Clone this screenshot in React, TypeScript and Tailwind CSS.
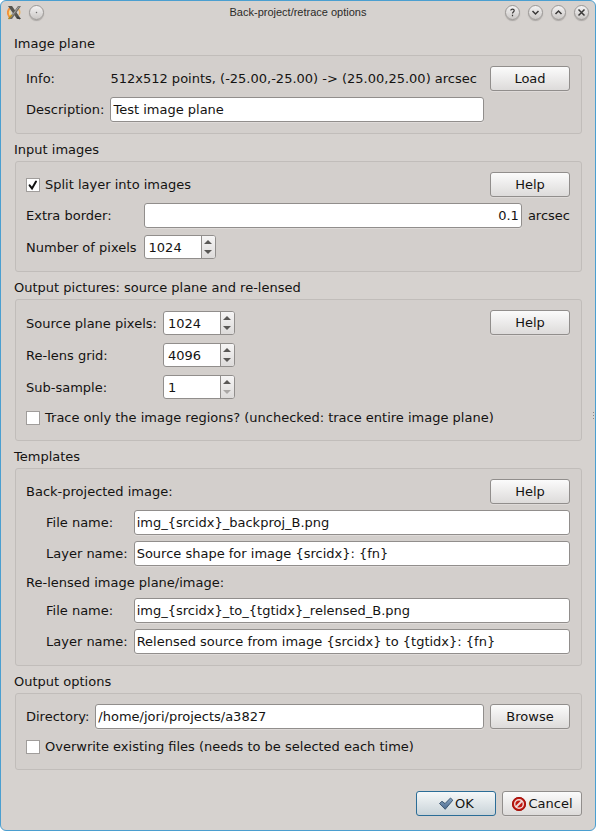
import React, { useId, useState } from "react";

const BUTTON =
  "h-[25px] w-20 rounded-[3px] border border-[#918e8c] bg-linear-to-b from-[#fbfbfb] to-[#dddbda] text-center shadow-[0_1px_0_#dedad8]";

const INPUT =
  "h-[25px] w-full min-w-0 rounded-[3px] border border-[#918e8c] bg-white px-0.5 outline-none shadow-[0_1px_0_#dedad8]";

interface GroupProps {
  title: string;
  children: React.ReactNode;
}

const Group: React.FC<GroupProps> = ({ title, children }) => (
  <section className="mb-2">
    <h2 className="mb-[3px] leading-4">{title}</h2>
    <div className="ml-px rounded-[3px] border border-[#c1bdba] bg-[#d3cfcc] pt-2.5 pr-[11px] pb-[11px] pl-2.5">
      {children}
    </div>
  </section>
);

interface CheckOptionProps {
  label: string;
  initial?: boolean;
}

const CheckOption: React.FC<CheckOptionProps> = ({ label, initial = false }) => {
  const [checked, setChecked] = useState(initial);

  return (
    <label className="flex items-center gap-[5px]">
      <span className="grid size-3.5 shrink-0">
        <input
          type="checkbox"
          checked={checked}
          onChange={(e) => setChecked(e.target.checked)}
          className="col-start-1 row-start-1 size-3.5 appearance-none border border-[#a09d9b] bg-white"
        />
        {checked && (
          <svg viewBox="0 0 14 14" fill="none" className="pointer-events-none col-start-1 row-start-1 size-3.5">
            <path d="M3.6 7.4L6 10.4L10 3.6" stroke="#111" strokeWidth="2" strokeLinecap="round" />
          </svg>
        )}
      </span>
      {label}
    </label>
  );
};

interface SpinRowProps {
  label: string;
  initial: number;
  min?: number;
}

// Renders two grid cells: the label and the spin box
const SpinRow: React.FC<SpinRowProps> = ({ label, initial, min = 0 }) => {
  const id = useId();
  const [value, setValue] = useState(initial);

  return (
    <>
      <label htmlFor={id} className="pt-0.5">
        {label}
      </label>
      <div className="flex h-[26px] items-center">
        <div className="flex h-6 w-[72px] overflow-hidden rounded-[3px] border border-[#918e8c] bg-white">
          <input
            id={id}
            type="number"
            min={min}
            value={value}
            onChange={(e) => setValue(Number(e.target.value))}
            className="w-14 min-w-0 appearance-none pt-0.5 pl-1 outline-none [appearance:textfield] [&::-webkit-inner-spin-button]:appearance-none"
          />
          <div className="flex flex-1 flex-col border-l border-[#918e8c] bg-linear-to-b from-[#f6f5f5] to-[#dddbda]">
            <button
              type="button"
              aria-label="Increase"
              onClick={() => setValue(value + 1)}
              className="flex flex-1 items-end justify-center pb-[3px] text-[#5a5856]"
            >
              <svg width="8" height="4" viewBox="0 0 8 4" fill="currentColor">
                <path d="M4 0L8 4H0z" />
              </svg>
            </button>
            <button
              type="button"
              aria-label="Decrease"
              disabled={value <= min}
              onClick={() => setValue(value - 1)}
              className="flex flex-1 items-start justify-center pt-[3px] text-[#5a5856] disabled:text-[#aaa7a5]"
            >
              <svg width="8" height="4" viewBox="0 0 8 4" fill="currentColor">
                <path d="M0 0H8L4 4z" />
              </svg>
            </button>
          </div>
        </div>
      </div>
    </>
  );
};

interface TextRowProps {
  label: string;
  initial: string;
}

const TextRow: React.FC<TextRowProps> = ({ label, initial }) => {
  const id = useId();

  return (
    <>
      <label htmlFor={id}>{label}</label>
      <input id={id} type="text" defaultValue={initial} className={INPUT} />
    </>
  );
};

interface TitleButtonProps {
  name: string;
  children: React.ReactNode;
}

const TitleButton: React.FC<TitleButtonProps> = ({ name, children }) => (
  <button
    type="button"
    aria-label={name}
    className="size-[15px] rounded-full border border-[#9b9896] bg-linear-to-b from-[#f4f3f3] to-[#cbc8c6] shadow-[0_1px_1px_#aaa6a3]"
  >
    <svg viewBox="0 0 13 13" fill="none" stroke="#3a3938" strokeWidth="1.5" className="size-[13px]">
      {children}
    </svg>
  </button>
);

const AppIcon: React.FC = () => (
  <svg viewBox="0 0 15 15" fill="none" className="size-[15px]">
    <path d="M3 3C0 6 0 10 4 13" stroke="#f4913a" strokeWidth="2" />
    <path d="M3 6C2 9 3 11 6 12" stroke="#f5dc7a" strokeWidth="1.5" />
    <path d="M10 4C13 4 13.5 8 12 10" stroke="#eab56a" strokeWidth="1.5" />
    <path d="M1 1H5L14 14H10z" fill="#55554f" />
    <path d="M11 1H14L5 14H1.5z" fill="#6d6c68" />
    <path d="M12 1.5L4 12" stroke="#a3a19c" strokeWidth="1" />
    <path d="M1.5 14L5 10" stroke="#b58a1e" strokeWidth="1.5" />
    <path d="M10 12L13 14" stroke="#3b3c3c" strokeWidth="1.5" />
  </svg>
);

const OkIcon: React.FC = () => (
  <svg viewBox="0 0 16 16" className="size-4">
    <defs>
      <linearGradient id="ok-fill" x1="0" y1="0" x2="0" y2="1">
        <stop offset="0" stopColor="#8aa6c4" />
        <stop offset="1" stopColor="#4a6a8e" />
      </linearGradient>
    </defs>
    <path
      d="M1.5 7.5L4 5.3L7 7.6L12.5 2L14.8 4.2L7.2 13.3z"
      fill="url(#ok-fill)"
      stroke="#3c5873"
      strokeLinejoin="round"
    />
  </svg>
);

const CancelIcon: React.FC = () => (
  <svg viewBox="0 0 16 16" fill="none" className="size-4">
    <circle cx="8" cy="8" r="7" fill="#c01810" />
    <circle cx="8" cy="8" r="6.5" stroke="#a0120c" />
    <circle cx="8" cy="8" r="4.3" stroke="#efdcda" strokeWidth="1.4" />
    <path d="M5 11L11 5" stroke="#efdcda" strokeWidth="1.8" />
  </svg>
);

export default function App() {
  return (
    <div className="min-h-screen bg-white">
      <form
        onSubmit={(e) => e.preventDefault()}
        className="relative flex min-h-screen flex-col rounded-[6px] border border-[#4b9fd0] bg-[#d6d2cf] font-['DejaVu_Sans',sans-serif] text-[13px] leading-4 text-[#141312]"
      >
        <header className="grid h-[22px] grid-cols-[1fr_auto_1fr] items-center px-[6px]">
          <div className="flex items-center gap-[7px]">
            <AppIcon />
            <TitleButton name="On all desktops">
              <circle cx="6.5" cy="6.5" r="0.3" strokeWidth="0.8" />
            </TitleButton>
          </div>
          <h1 className="font-['Liberation_Sans',sans-serif] text-[11px] text-[#2b2a29]">
            Back-project/retrace options
          </h1>
          <div className="flex justify-end gap-2">
            <TitleButton name="Context help">
              <path
                d="M4.8 4.5C4.8 2.6 8.2 2.6 8.2 4.5C8.2 6 6.5 6 6.5 7.6M6.5 8.8V10.2"
                strokeWidth="1.2"
              />
            </TitleButton>
            <TitleButton name="Minimize">
              <path d="M3.5 5L6.5 8L9.5 5" />
            </TitleButton>
            <TitleButton name="Maximize">
              <path d="M3.5 8L6.5 5L9.5 8" />
            </TitleButton>
            <TitleButton name="Close">
              <path d="M3.5 3.5L9.5 9.5M9.5 3.5L3.5 9.5" />
            </TitleButton>
          </div>
        </header>

        <main className="px-[13px] pt-[13px]">
          <Group title="Image plane">
            <div className="grid grid-cols-[auto_1fr_auto] items-center gap-1.5">
              <span>Info:</span>
              <span>512x512 points, (-25.00,-25.00) -&gt; (25.00,25.00) arcsec</span>
              <button type="button" className={BUTTON}>
                Load
              </button>
              <TextRow label="Description:" initial="Test image plane" />
            </div>
          </Group>

          <Group title="Input images">
            <div className="mb-1.5 flex items-center justify-between">
              <CheckOption label="Split layer into images" initial />
              <button type="button" className={BUTTON}>
                Help
              </button>
            </div>
            <div className="grid grid-cols-[auto_1fr] items-center gap-x-[7px] gap-y-1.5">
              <label htmlFor="extra-border">Extra border:</label>
              <div className="flex items-center gap-1.5">
                <input
                  id="extra-border"
                  type="text"
                  defaultValue="0.1"
                  className={`${INPUT} text-right`}
                />
                <span>arcsec</span>
              </div>
              <SpinRow label="Number of pixels" initial={1024} />
            </div>
          </Group>

          <Group title="Output pictures: source plane and re-lensed">
            <div className="mb-1.5 flex items-start justify-between">
              <div className="grid grid-cols-[auto_1fr] items-center gap-1.5">
                <SpinRow label="Source plane pixels:" initial={1024} />
                <SpinRow label="Re-lens grid:" initial={4096} />
                <SpinRow label="Sub-sample:" initial={1} min={1} />
              </div>
              <button type="button" className={BUTTON}>
                Help
              </button>
            </div>
            <div className="flex h-[23px] items-center">
              <CheckOption label="Trace only the image regions? (unchecked: trace entire image plane)" />
            </div>
          </Group>

          <Group title="Templates">
            <div className="mb-1.5 flex items-center justify-between">
              <h3>Back-projected image:</h3>
              <button type="button" className={BUTTON}>
                Help
              </button>
            </div>
            <div className="grid grid-cols-[auto_1fr] items-center gap-1.5 pl-5">
              <TextRow label="File name:" initial="img_{srcidx}_backproj_B.png" />
              <TextRow label="Layer name:" initial="Source shape for image {srcidx}: {fn}" />
            </div>
            <h3 className="mt-2 mb-1.5 leading-[18px]">Re-lensed image plane/image:</h3>
            <div className="grid grid-cols-[auto_1fr] items-center gap-1.5 pl-5">
              <TextRow label="File name:" initial="img_{srcidx}_to_{tgtidx}_relensed_B.png" />
              <TextRow label="Layer name:" initial="Relensed source from image {srcidx} to {tgtidx}: {fn}" />
            </div>
          </Group>

          <Group title="Output options">
            <div className="mb-1.5 grid grid-cols-[auto_1fr_auto] items-center gap-1.5">
              <TextRow label="Directory:" initial="/home/jori/projects/a3827" />
              <button type="button" className={BUTTON}>
                Browse
              </button>
            </div>
            <div className="flex h-[23px] items-center">
              <CheckOption label="Overwrite existing files (needs to be selected each time)" />
            </div>
          </Group>
        </main>

        <footer className="flex justify-end gap-1.5 px-[13px] pt-[13px] pb-3.5">
          <button
            type="submit"
            className="flex h-[25px] w-20 items-center justify-center gap-px rounded-[3px] border border-[#2b6d97] bg-linear-to-b from-[#f5f8f9] to-[#c9d3d8]"
          >
            <OkIcon />
            OK
          </button>
          <button type="button" className={`${BUTTON} flex items-center justify-center gap-px`}>
            <CancelIcon />
            Cancel
          </button>
        </footer>

        {/* Splitter grip on the right edge */}
        <div className="absolute top-[411px] right-px flex flex-col gap-0.5">
          <span className="size-px bg-[#8a8785]" />
          <span className="size-px bg-[#8a8785]" />
          <span className="size-px bg-[#8a8785]" />
        </div>
      </form>
    </div>
  );
}
